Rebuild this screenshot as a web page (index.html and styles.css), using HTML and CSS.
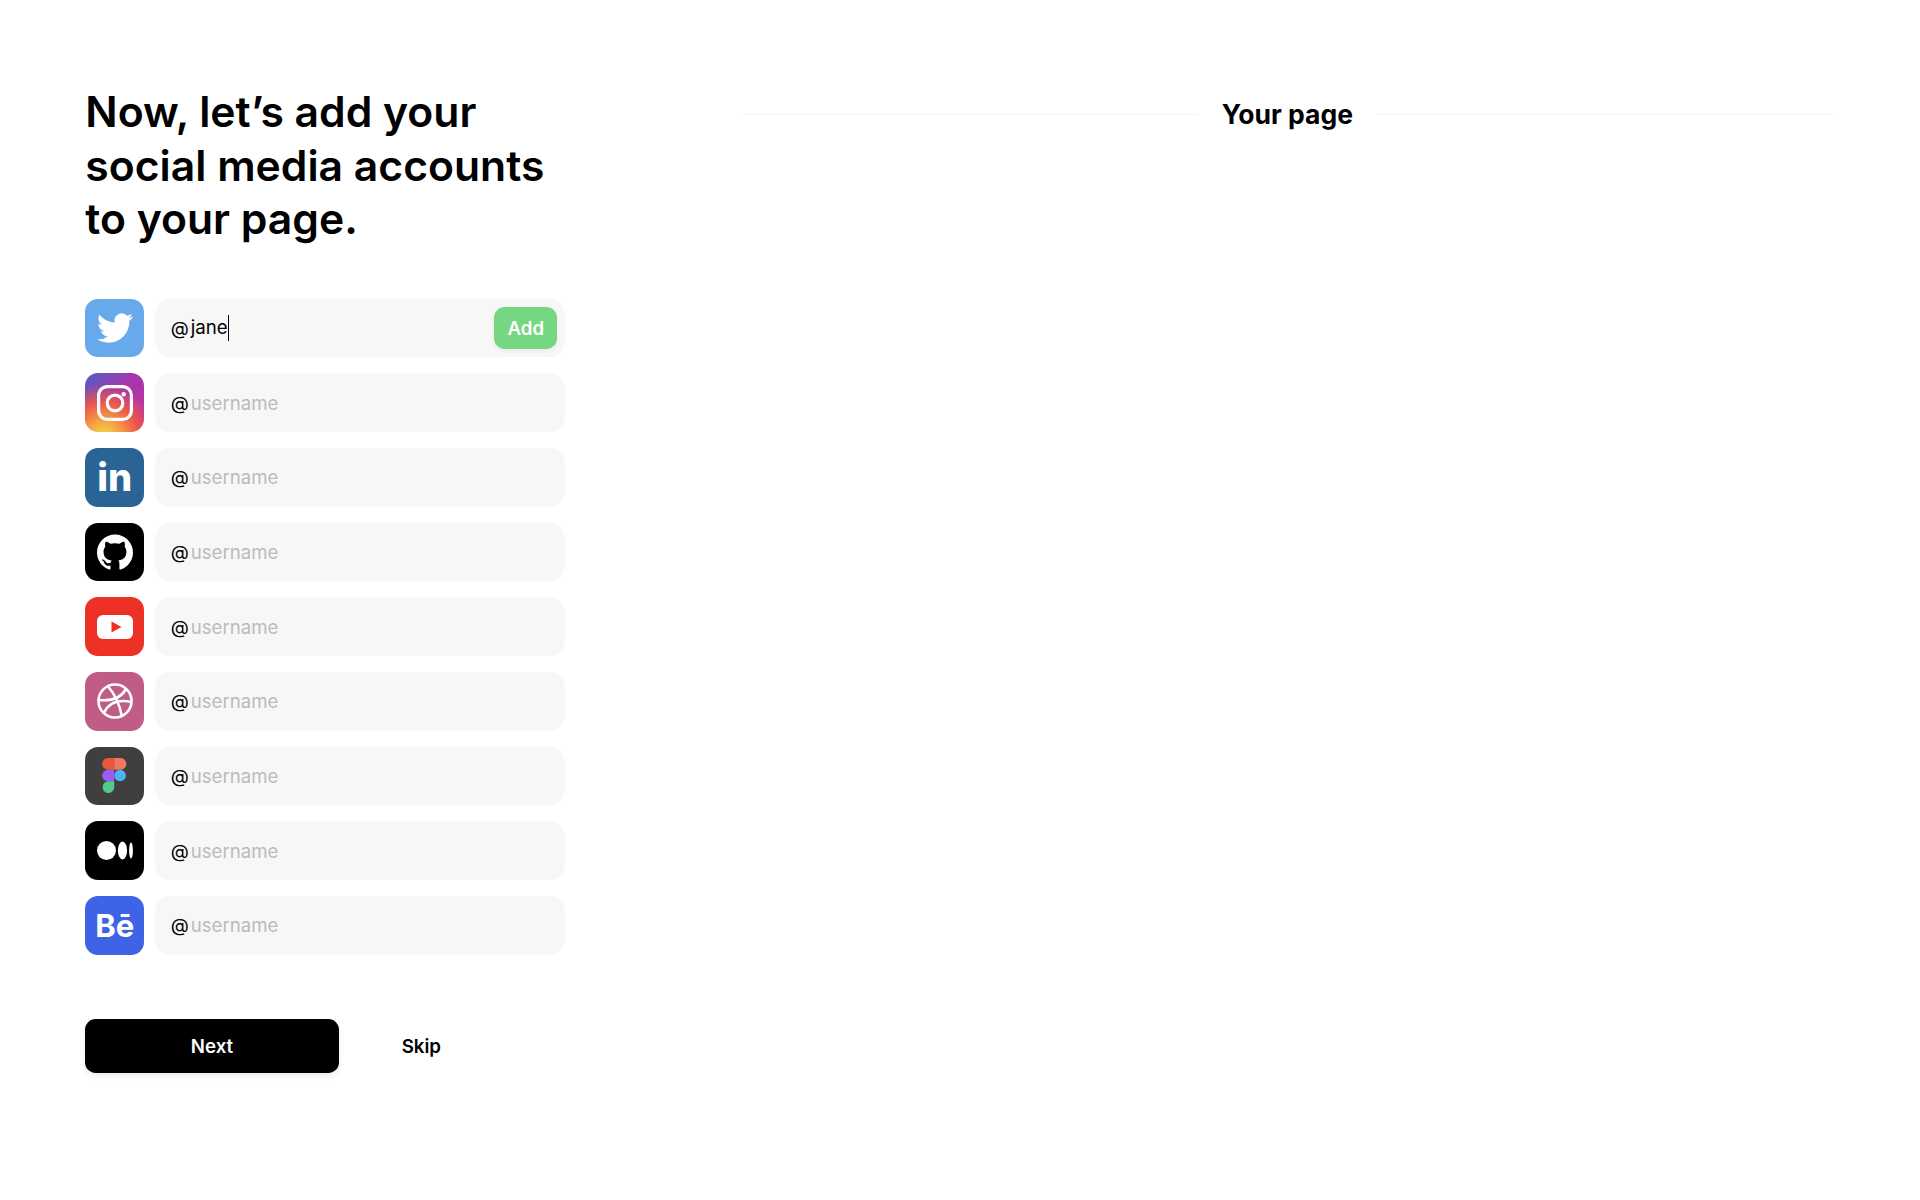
FILE: index.html
```html
<!DOCTYPE html>
<html lang="en">
<head>
    <meta charset="UTF-8">
    <meta name="viewport" content="width=device-width, initial-scale=1.0">
    <title>Add your social accounts</title>
    <link rel="stylesheet" href="styles.css">
</head>
<body>
    <div class="page">
        <main class="setup">
            <h1>Now, let’s add your social media accounts to your page.</h1>

            <div class="accounts">
                <div class="account">
                    <div class="icon twitter">
                        <svg viewBox="0 0 24 24" width="36" height="36"><path fill="#fff" d="M23.953 4.57a10 10 0 01-2.825.775 4.958 4.958 0 002.163-2.723c-.951.555-2.005.959-3.127 1.184a4.92 4.92 0 00-8.384 4.482C7.69 8.095 4.067 6.13 1.64 3.162a4.822 4.822 0 00-.666 2.475c0 1.71.87 3.213 2.188 4.096a4.904 4.904 0 01-2.228-.616v.06a4.923 4.923 0 003.946 4.827 4.996 4.996 0 01-2.212.085 4.936 4.936 0 004.604 3.417 9.867 9.867 0 01-6.102 2.105c-.39 0-.779-.023-1.17-.067a13.995 13.995 0 007.557 2.209c9.053 0 13.998-7.496 13.998-13.985 0-.21 0-.42-.015-.63A9.935 9.935 0 0024 4.59z"/></svg>
                    </div>
                    <div class="field">
                        <span class="at">@</span><span class="value">jane</span>
                        <button class="add">Add</button>
                    </div>
                </div>

                <div class="account">
                    <div class="icon instagram">
                        <svg viewBox="0 0 36 36" width="36" height="36" fill="none" stroke="#fff" stroke-width="3.2"><rect x="1.6" y="1.6" width="32.8" height="32.8" rx="9"/><circle cx="18" cy="18" r="7.800"/><circle cx="26.700" cy="9.300" r="2.200" fill="#fff" stroke="none"/></svg>
                    </div>
                    <div class="field"><span class="at">@</span><span class="placeholder">username</span></div>
                </div>

                <div class="account">
                    <div class="icon linkedin"><span class="logo-text">in</span></div>
                    <div class="field"><span class="at">@</span><span class="placeholder">username</span></div>
                </div>

                <div class="account">
                    <div class="icon github">
                        <svg viewBox="0 0 24 24" width="36" height="36"><path fill="#fff" d="M12 .297c-6.63 0-12 5.373-12 12 0 5.303 3.438 9.8 8.205 11.385.6.113.82-.258.82-.577 0-.285-.01-1.04-.015-2.04-3.338.724-4.042-1.61-4.042-1.61C4.422 18.07 3.633 17.7 3.633 17.7c-1.087-.744.084-.729.084-.729 1.205.084 1.838 1.236 1.838 1.236 1.07 1.835 2.809 1.305 3.495.998.108-.776.417-1.305.76-1.605-2.665-.3-5.466-1.332-5.466-5.93 0-1.31.465-2.38 1.235-3.22-.135-.303-.54-1.523.105-3.176 0 0 1.005-.322 3.3 1.23.96-.267 1.98-.399 3-.405 1.02.006 2.04.138 3 .405 2.28-1.552 3.285-1.23 3.285-1.23.645 1.653.24 2.873.12 3.176.765.84 1.23 1.91 1.23 3.22 0 4.61-2.805 5.625-5.475 5.92.42.36.81 1.096.81 2.22 0 1.606-.015 2.896-.015 3.286 0 .315.21.69.825.57C20.565 22.092 24 17.592 24 12.297c0-6.627-5.373-12-12-12"/></svg>
                    </div>
                    <div class="field"><span class="at">@</span><span class="placeholder">username</span></div>
                </div>

                <div class="account">
                    <div class="icon youtube">
                        <svg viewBox="0 0 36 24" width="36" height="24"><rect width="36" height="24" rx="6" fill="#fff"/><path fill="#ed3124" d="M14.500 6.500l10 5.500-10 5.500z"/></svg>
                    </div>
                    <div class="field"><span class="at">@</span><span class="placeholder">username</span></div>
                </div>

                <div class="account">
                    <div class="icon dribbble">
                        <svg viewBox="0 0 36 36" width="36" height="36" fill="none" stroke="#fff" stroke-width="2.600"><circle cx="18" cy="18" r="16.500"/><path d="M11 3.500c5 5.500 11 15 14 30"/><path d="M1.500 17c10 1 22-1 27.500-11"/><path d="M7 30c4-9 13-14 27.500-11"/></svg>
                    </div>
                    <div class="field"><span class="at">@</span><span class="placeholder">username</span></div>
                </div>

                <div class="account">
                    <div class="icon figma">
                        <svg viewBox="0 0 25 36" width="24.500" height="35">
                            <path fill="#e9583a" d="M12.500 0H6a6 6 0 000 12h6.500z"/>
                            <path fill="#f1775f" d="M12.500 0H19a6 6 0 010 12h-6.500z"/>
                            <path fill="#9c5cf2" d="M12.500 12H6a6 6 0 000 12h6.500z"/>
                            <circle fill="#4fb1f3" cx="18.500" cy="18" r="6"/>
                            <path fill="#55c98a" d="M12.500 24H6a6 6 0 106.500 6z"/>
                        </svg>
                    </div>
                    <div class="field"><span class="at">@</span><span class="placeholder">username</span></div>
                </div>

                <div class="account">
                    <div class="icon medium">
                        <svg viewBox="0 0 36 19" width="36" height="19" fill="#fff"><circle cx="9.500" cy="9.500" r="9.500"/><ellipse cx="25.500" cy="9.500" rx="4.600" ry="9"/><ellipse cx="34" cy="9.500" rx="1.900" ry="8"/></svg>
                    </div>
                    <div class="field"><span class="at">@</span><span class="placeholder">username</span></div>
                </div>

                <div class="account">
                    <div class="icon behance"><span class="logo-text">Bē</span></div>
                    <div class="field"><span class="at">@</span><span class="placeholder">username</span></div>
                </div>
            </div>

            <div class="actions">
                <button class="next">Next</button>
                <button class="skip">Skip</button>
            </div>
        </main>

        <section class="preview">
            <div class="preview-title">Your page</div>
        </section>
    </div>
</body>
</html>
```

FILE: styles.css
```css
* {
    box-sizing: border-box;
}
body {
    font-family: Inter, "Liberation Sans", sans-serif;
    margin: 0;
    background: #fff;
    color: #000;
}
button {
    font-family: inherit;
    border: none;
    cursor: pointer;
}
.page {
    display: flex;
    gap: 174.67px;
    min-height: 1200px;
    padding: 85.33px 85.33px 0;
}
.setup {
    width: 480px;
    flex-shrink: 0;
}
h1 {
    font-size: 42.67px;
    line-height: 53.33px;
    font-weight: 600;
    margin: 0 0 53.33px;
}
.accounts {
    display: flex;
    flex-direction: column;
    gap: 16px;
}
.account {
    display: flex;
    gap: 10.67px;
    height: 58.67px;
}
.icon {
    width: 58.67px;
    height: 58.67px;
    flex-shrink: 0;
    border-radius: 13px;
    display: flex;
    align-items: center;
    justify-content: center;
    color: #fff;
}
.logo-text {
    font-weight: 700;
}
.twitter {
    background: #67a9ea;
}
.instagram {
    background:
        radial-gradient(circle at 32% 108%, #f5d94e 0%, #f5a742 20%, rgba(238, 88, 72, 0.95) 46%, rgba(238, 88, 72, 0) 70%),
        linear-gradient(135deg, #4f5fc4 0%, #a636ad 45%, #c2339a 100%);
}
.linkedin {
    background: #2a6496;
}
.linkedin .logo-text {
    font-size: 38px;
    font-weight: 800;
}
.github {
    background: #000;
}
.youtube {
    background: #ed3124;
}
.dribbble {
    background: #c05d86;
}
.figma {
    background: #3f3f3f;
}
.medium {
    background: #000;
}
.behance {
    background: #3f63e6;
}
.behance .logo-text {
    font-size: 31px;
}
.field {
    flex: 1;
    display: flex;
    align-items: center;
    background: #f7f7f7;
    border-radius: 16px;
    padding: 1px 8px 0 16px;
    font-size: 18.67px;
}
.at {
    margin-right: 2px;
}
.value {
    border-right: 1.5px solid #000;
    line-height: 26px;
}
.placeholder {
    color: #bbb;
}
.add {
    margin-left: auto;
    background: #76d783;
    color: #fff;
    font-size: 18.67px;
    font-weight: 600;
    width: 63px;
    height: 42.67px;
    padding: 1px 0 0;
    margin-top: -1px;
    border-radius: 10.67px;
    box-shadow: 0 2px 4px rgba(0, 0, 0, 0.05);
}
.actions {
    display: flex;
    align-items: center;
    margin-top: 64px;
}
.next {
    width: 253.33px;
    height: 54.67px;
    padding: 1px 0 0;
    background: #000;
    color: #fff;
    font-size: 18.67px;
    font-weight: 600;
    border-radius: 10.67px;
    box-shadow: 0 3px 6px rgba(0, 0, 0, 0.08);
}
.skip {
    background: none;
    color: #000;
    font-size: 18.67px;
    font-weight: 600;
    margin-left: 63px;
    padding: 1px 0 0;
}
.preview {
    flex: 1;
}
.preview-title {
    display: flex;
    align-items: center;
    gap: 23px;
    font-size: 26.5px;
    font-weight: 700;
    line-height: 58px;
}
.preview-title::before,
.preview-title::after {
    content: "";
    flex: 1;
    height: 1.5px;
    background: #f5f5f5;
}
```
